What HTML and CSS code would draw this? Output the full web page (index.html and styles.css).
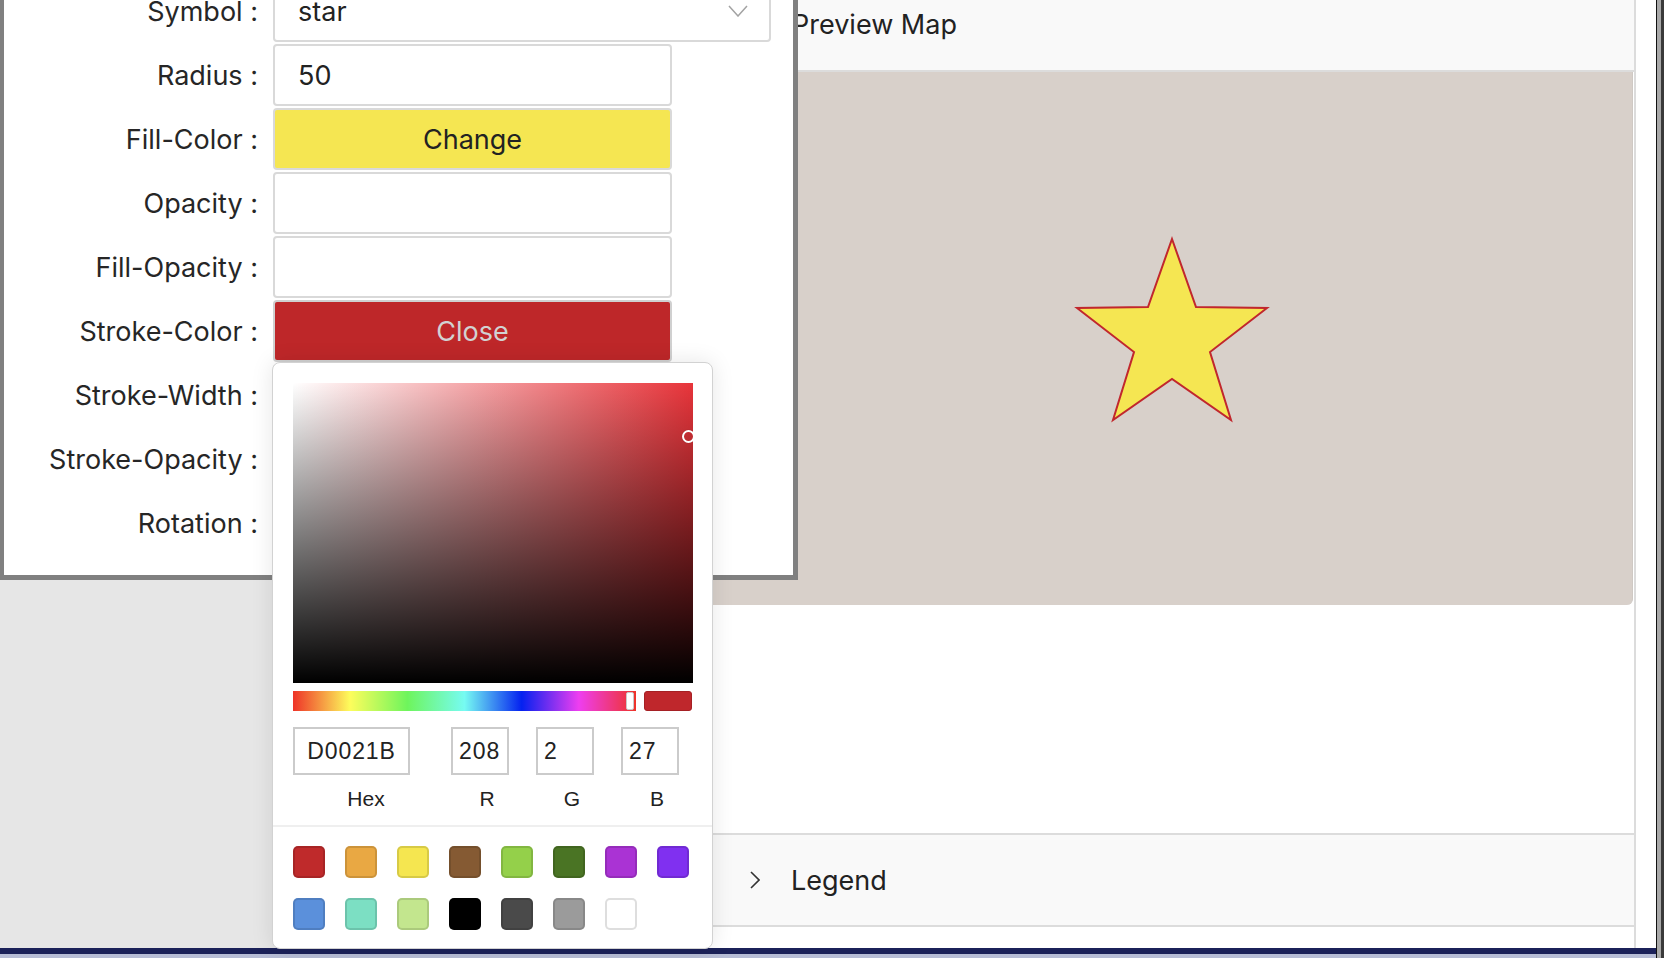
FILE: index.html
```html
<!DOCTYPE html>
<html lang="en">
<head>
<meta charset="utf-8">
<title>Symbol editor</title>
<link rel="stylesheet" href="styles.css">
</head>
<body>
<div class="page">
  <div class="main">
    <div class="sidebar"></div>
    <div class="panel">
      <div class="panel-head">
        <svg class="chev" width="18" height="10" viewBox="0 0 18 10"><path d="M1 1 L9 9 L17 1" fill="none" stroke="#333" stroke-width="1.8"/></svg>
        <span>Preview Map</span>
      </div>
      <div class="map">
        <svg class="map-svg" viewBox="0 0 926 533" preserveAspectRatio="xMidYMid meet">
          <polygon points="466,167 490,235 561,236 504,280 525,348 466,307 407,348 428,280 371,236 442,235" fill="#f5e652" stroke="#c1272d" stroke-width="2" stroke-linejoin="miter"/>
        </svg>
      </div>
      <div class="panel-space"></div>
      <div class="legend">
        <svg class="chev-r" width="10" height="18" viewBox="0 0 10 18"><path d="M1 1 L9 9 L1 17" fill="none" stroke="#333" stroke-width="1.6"/></svg>
        <span>Legend</span>
      </div>
    </div>
    <div class="gutter"></div>
  </div>
  <div class="footer"></div>

  <div class="dialog">
    <div class="row">
      <div class="label">Symbol :</div>
      <div class="field select"><span>star</span>
        <svg class="select-chev" width="20" height="12" viewBox="0 0 20 12"><path d="M1 1 L10 11 L19 1" fill="none" stroke="#a3a3a3" stroke-width="1.5"/></svg>
      </div>
    </div>
    <div class="row">
      <div class="label">Radius :</div>
      <div class="field">50</div>
    </div>
    <div class="row">
      <div class="label">Fill-Color :</div>
      <div class="field btn btn-yellow">Change</div>
    </div>
    <div class="row">
      <div class="label">Opacity :</div>
      <div class="field"></div>
    </div>
    <div class="row">
      <div class="label">Fill-Opacity :</div>
      <div class="field"></div>
    </div>
    <div class="row">
      <div class="label">Stroke-Color :</div>
      <div class="field btn btn-red">Close
        <div class="picker">
          <div class="pk-top">
            <div class="sat"><div class="sat-cursor"></div></div>
            <div class="hue-row">
              <div class="hue"><div class="hue-handle"></div></div>
              <div class="preview"></div>
            </div>
            <div class="inputs">
              <div class="col col-hex">
                <div class="pk-input center">D0021B</div>
                <div class="pk-label">Hex</div>
              </div>
              <div class="col col-rgb col-r">
                <div class="pk-input">208</div>
                <div class="pk-label">R</div>
              </div>
              <div class="col col-rgb">
                <div class="pk-input">2</div>
                <div class="pk-label">G</div>
              </div>
              <div class="col col-rgb">
                <div class="pk-input">27</div>
                <div class="pk-label">B</div>
              </div>
            </div>
          </div>
          <div class="swatches">
            <span class="sw" style="background:#bf2a2b"></span>
            <span class="sw" style="background:#e9a843"></span>
            <span class="sw" style="background:#f5e650"></span>
            <span class="sw" style="background:#855a33"></span>
            <span class="sw" style="background:#94d04a"></span>
            <span class="sw" style="background:#4a7424"></span>
            <span class="sw" style="background:#aa33d4"></span>
            <span class="sw" style="background:#8030f0"></span>
            <span class="sw" style="background:#5b90db"></span>
            <span class="sw" style="background:#7cdfc3"></span>
            <span class="sw" style="background:#c3e68e"></span>
            <span class="sw" style="background:#000000"></span>
            <span class="sw" style="background:#4a4a4a"></span>
            <span class="sw" style="background:#9b9b9b"></span>
            <span class="sw sw-white" style="background:#ffffff"></span>
          </div>
        </div>
      </div>
    </div>
    <div class="row">
      <div class="label">Stroke-Width :</div>
      <div class="field"></div>
    </div>
    <div class="row">
      <div class="label">Stroke-Opacity :</div>
      <div class="field"></div>
    </div>
    <div class="row">
      <div class="label">Rotation :</div>
      <div class="field"></div>
    </div>
  </div>
</div>
<div class="scrollbar"></div>
</body>
</html>
```

FILE: styles.css
```css
* { box-sizing: border-box; }
html, body { margin: 0; padding: 0; overflow: hidden; }
body {
  width: 1664px;
  height: 958px;
  display: flex;
  background: #fff;
  font-family: Inter, "Liberation Sans", sans-serif;
  color: #222;
}
.page {
  width: 1656px;
  height: 958px;
  display: flex;
  flex-direction: column;
  position: relative;
}
.main {
  display: flex;
  height: 948px;
}
.sidebar {
  width: 704px;
  background: #e6e6e6;
}
.panel {
  width: 932px;
  display: flex;
  flex-direction: column;
  background: #fff;
  border-right: 2px solid #dcdcdc;
}
.panel-head {
  height: 72px;
  flex: none;
  background: #f9f9f9;
  border-bottom: 2px solid #dcdcdc;
  display: flex;
  align-items: center;
  padding: 0 0 20px 42px;
  font-size: 27px;
  line-height: 34px;
}
.chev { margin-right: 28px; }
.map {
  height: 533px;
  flex: none;
  margin: 0 1px 0 2px;
  background: #d8d0ca;
  border-radius: 0 0 6px 6px;
  border-right: 1px solid #cfc9c4;
  display: flex;
}
.map-svg { width: 100%; height: 100%; }
.panel-space { flex: 1; }
.legend {
  height: 94px;
  flex: none;
  margin-bottom: 21px;
  background: #f9f9f9;
  border-top: 2px solid #dcdcdc;
  border-bottom: 2px solid #dcdcdc;
  display: flex;
  align-items: center;
  padding-left: 46px;
  font-size: 27px;
}
.chev-r { margin-right: 31px; }
.gutter { flex: 1; background: #fff; }
.footer {
  height: 10px;
  background: #b7bdd6;
  border-top: 6px solid #1b2159;
}
.scrollbar {
  width: 8px;
  height: 958px;
  background: #a9a9a9;
  border-left: 1px solid #111;
  border-right: 3px solid #3a3a3a;
}

/* dialog */
.dialog {
  position: absolute;
  left: 0;
  top: -45px;
  width: 798px;
  background: #fff;
  border: 5px solid #808080;
  border-left-width: 4px;
  padding: 20px 0 21px 0;
  display: flex;
  flex-direction: column;
  gap: 2px;
  z-index: 5;
}
.row {
  display: grid;
  grid-template-columns: 254px 399px;
  column-gap: 15px;
  align-items: center;
  height: 62px;
}
.label {
  text-align: right;
  font-size: 27px;
  color: #262626;
  white-space: nowrap;
}
.field {
  height: 62px;
  border: 2px solid #d9d9d9;
  border-radius: 4px;
  padding-left: 23px;
  display: flex;
  align-items: center;
  font-size: 27px;
  background: #fff;
  position: relative;
}
.select { width: 498px; padding-right: 21px; }
.select-chev { margin-left: auto; }
.btn { justify-content: center; padding-left: 0; }
.btn-yellow { background: #f5e652; color: #222; }
.btn-red { background: #be2729; color: #d2d2d2; border-color: #d0d0d0; }

/* picker */
.picker {
  position: absolute;
  top: calc(100% + 2px);
  left: -3px;
  width: 441px;
  background: #fff;
  border: 1px solid #d2d2d2;
  border-radius: 8px;
  box-shadow: 0 0 22px rgba(0, 0, 0, 0.10);
  color: #222;
  font-family: "Liberation Sans", Arial, sans-serif;
  z-index: 10;
  cursor: default;
}
.pk-top { padding: 20px 20px 14px 20px; }
.sat {
  width: 400px;
  height: 300px;
  position: relative;
  overflow: hidden;
  background:
    linear-gradient(to top, #000, rgba(0, 0, 0, 0)),
    linear-gradient(to right, #fff, #e8343a);
}
.sat-cursor {
  position: absolute;
  left: 389px;
  top: 47px;
  width: 13px;
  height: 13px;
  border: 2px solid #fff;
  border-radius: 50%;
  box-shadow: 0 0 1px rgba(0, 0, 0, 0.4);
}
.hue-row {
  margin-top: 8px;
  display: flex;
  gap: 8px;
  height: 20px;
}
.hue {
  width: 344px;
  height: 20px;
  position: relative;
  background: linear-gradient(to right,
    #ee3328 0%, #fdfd5c 16.66%, #6ef55c 33.33%, #76fbf2 50%,
    #0421f0 66.66%, #ee3ef0 83.33%, #ee3328 100%);
}
.hue-handle {
  position: absolute;
  left: 333px;
  top: 1px;
  width: 8px;
  height: 18px;
  background: #fff;
  border: 1px solid #c8c8c8;
  border-radius: 2px;
}
.preview {
  width: 48px;
  height: 20px;
  background: #bf272c;
  border: 1px solid #a52024;
  border-radius: 3px;
}
.inputs {
  margin-top: 16px;
  display: flex;
}
.col { display: flex; flex-direction: column; }
.col-hex { width: 117px; margin-right: 41px; }
.col-rgb { width: 58px; margin-left: 27px; }
.col-r { margin-left: 0; }
.pk-input {
  height: 48px;
  border: 2px solid #cbcbcb;
  font-size: 23px;
  letter-spacing: 0.9px;
  display: flex;
  align-items: center;
  padding-left: 6px;
  white-space: nowrap;
}
.pk-input.center { justify-content: center; padding-left: 0; }
.pk-label {
  margin-top: 12px;
  font-size: 21px;
  line-height: 24px;
  text-align: center;
  padding-left: 14px;
  white-space: nowrap;
}
.col-hex .pk-label { padding-left: 29px; }
.swatches {
  border-top: 2px solid #efefef;
  padding: 19px 20px 18px 20px;
  display: grid;
  grid-template-columns: repeat(8, 32px);
  grid-auto-rows: 32px;
  gap: 20px;
}
.sw {
  display: block;
  width: 32px;
  height: 32px;
  border-radius: 5px;
  box-shadow: inset 0 0 0 2px rgba(0, 0, 0, 0.12);
}
.sw-white { box-shadow: inset 0 0 0 2px #dedede; }
```
